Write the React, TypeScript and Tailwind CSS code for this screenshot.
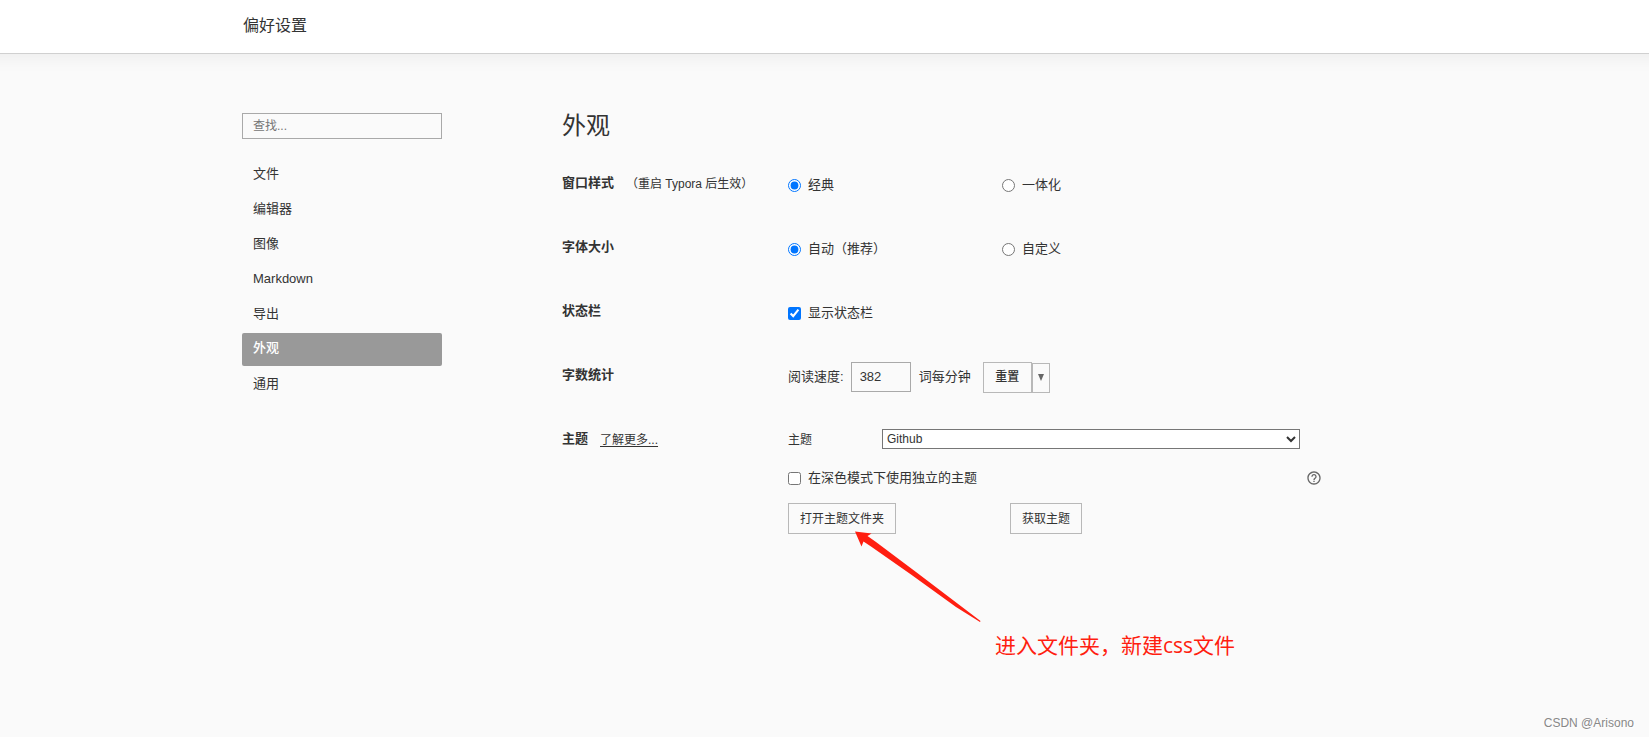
import React, { useState } from "react";
import { MdHelpOutline } from "react-icons/md";

const sections = ["文件", "编辑器", "图像", "Markdown", "导出", "外观", "通用"];

const buttonClass = "border border-[#b8b8b8] text-xs text-[#333] hover:bg-[#eee]";

type RowProps = {
  title: string;
  note?: React.ReactNode;
  children: React.ReactNode;
};

function Row({ title, note, children }: RowProps) {
  return (
    <section className="grid min-h-16 grid-cols-[226px_1fr]">
      <div className="flex h-5 items-center">
        <h2 className="font-bold">{title}</h2>
        {note}
      </div>
      <div>{children}</div>
    </section>
  );
}

type ChoiceProps = {
  type: "radio" | "checkbox";
  label: string;
  name: string;
  checked: boolean;
  onChange: () => void;
};

function Choice({ type, label, name, checked, onChange }: ChoiceProps) {
  return (
    <label className="flex h-6 items-center gap-[7px]">
      <input
        type={type}
        name={name}
        checked={checked}
        onChange={onChange}
        className="h-[13px] w-[13px] accent-[#0075ff]"
      />
      {label}
    </label>
  );
}

function Annotation() {
  return (
    <div className="pointer-events-none absolute left-[66px] top-7 text-[#ff1e10]">
      <svg width="128" height="92" viewBox="0 0 128 92" fill="currentColor">
        <path d="M1 0.5 L17.5 2.5 L13.5 5 L22 11 L62 41 L126.5 90 L126 91 L102 76 L57 43.5 L17 15.5 L9.5 10.5 L7.5 15.5 Z" />
      </svg>
      <p className="ml-[141px] mt-1.5 whitespace-nowrap font-['Open_Sans','Noto_Sans_CJK_SC',sans-serif] text-[21px] leading-8">
        进入文件夹，新建css文件
      </p>
    </div>
  );
}

export default function App() {
  const [active, setActive] = useState("外观");
  const [windowStyle, setWindowStyle] = useState("经典");
  const [fontSize, setFontSize] = useState("自动（推荐）");
  const [showStatus, setShowStatus] = useState(true);
  const [darkTheme, setDarkTheme] = useState(false);
  const [speed, setSpeed] = useState("382");

  return (
    <div className="relative min-h-screen overflow-x-hidden bg-[#fafafa] font-['Liberation_Sans','Noto_Sans_CJK_SC',sans-serif] text-[13px] leading-5 text-[#333]">
      <header className="border-b border-[#d0d0d0] bg-white shadow-[0_-20px_20px_20px_rgba(0,0,0,0.08)]">
        <div className="mx-auto flex h-[53px] max-w-[1165px] items-center">
          <h1 className="pb-0.5 pl-px text-base">偏好设置</h1>
        </div>
      </header>

      <div className="mx-auto flex max-w-[1165px] gap-[120px] pt-[59px]">
        <aside className="w-[200px] shrink-0">
          <input
            type="search"
            aria-label="查找"
            placeholder="查找..."
            className="h-[26px] w-full border border-[#a9a9a9] bg-transparent px-2.5 text-xs placeholder:text-[#757575]"
          />
          <nav className="mt-[19px] flex flex-col gap-0.5">
            {sections.map((item) => (
              <a
                key={item}
                href="#"
                onClick={() => setActive(item)}
                className={
                  item === active
                    ? "flex h-[33px] items-center rounded-xs bg-[#999] px-[11px] pb-1 font-medium text-white"
                    : "flex h-[33px] items-center px-[11px] pb-0.5"
                }
              >
                {item}
              </a>
            ))}
          </nav>
        </aside>

        <main className="max-w-[760px] flex-1">
          <h1 className="mb-[34px] text-2xl leading-[26px]">外观</h1>

          <Row title="窗口样式" note={<span className="ml-3 pt-0.5 text-xs">（重启 Typora 后生效）</span>}>
            <div className="grid grid-cols-[214px_1fr]">
              {["经典", "一体化"].map((value) => (
                <Choice
                  key={value}
                  type="radio"
                  name="window-style"
                  label={value}
                  checked={windowStyle === value}
                  onChange={() => setWindowStyle(value)}
                />
              ))}
            </div>
          </Row>

          <Row title="字体大小">
            <div className="grid grid-cols-[214px_1fr]">
              {["自动（推荐）", "自定义"].map((value) => (
                <Choice
                  key={value}
                  type="radio"
                  name="font-size"
                  label={value}
                  checked={fontSize === value}
                  onChange={() => setFontSize(value)}
                />
              ))}
            </div>
          </Row>

          <Row title="状态栏">
            <Choice
              type="checkbox"
              name="status-bar"
              label="显示状态栏"
              checked={showStatus}
              onChange={() => setShowStatus(!showStatus)}
            />
          </Row>

          <Row title="字数统计">
            <div className="flex h-6 items-center">
              <label htmlFor="speed">阅读速度:</label>
              <input
                id="speed"
                value={speed}
                onChange={(event) => setSpeed(event.target.value)}
                className="ml-[7px] h-[30px] w-[60px] border border-[#a9a9a9] px-2 pb-0.5"
              />
              <span className="ml-2">词每分钟</span>
              <div className="ml-3 flex items-end">
                <button type="button" onClick={() => setSpeed("382")} className={`${buttonClass} h-[31px] w-[49px] font-medium`}>
                  重置
                </button>
                <button type="button" aria-label="更多" className={`${buttonClass} flex h-[30px] w-[18px] items-center justify-center`}>
                  <svg width="6" height="7" viewBox="0 0 6 7" fill="#666">
                    <path d="M0 0h6L3 7z" />
                  </svg>
                </button>
              </div>
            </div>
          </Row>

          <Row
            title="主题"
            note={
              <a href="#" className="ml-3 pt-0.5 text-xs underline underline-offset-2">
                了解更多...
              </a>
            }
          >
            <div className="flex h-5 items-center">
              <label htmlFor="theme" className="w-[94px] pt-0.5 text-xs">
                主题
              </label>
              <select id="theme" className="h-5 w-[418px] border border-[#767676] bg-white text-xs text-[#333]">
                <option>Github</option>
                <option>Newsprint</option>
                <option>Night</option>
              </select>
            </div>
            <div className="mt-[17px] flex items-center justify-between">
              <Choice
                type="checkbox"
                name="dark-theme"
                label="在深色模式下使用独立的主题"
                checked={darkTheme}
                onChange={() => setDarkTheme(!darkTheme)}
              />
              <MdHelpOutline size={16} color="#666" />
            </div>
            <div className="relative mt-[13px] grid grid-cols-[222px_1fr]">
              <div>
                <button type="button" className={`${buttonClass} h-[31px] w-[108px]`}>
                  打开主题文件夹
                </button>
              </div>
              <div>
                <button type="button" className={`${buttonClass} h-[31px] w-[72px]`}>
                  获取主题
                </button>
              </div>
              <Annotation />
            </div>
          </Row>
        </main>
      </div>

      <footer className="absolute bottom-1 right-[15px] text-xs leading-5 text-[#888] [text-shadow:1px_1px_1px_#fff]">
        CSDN @Arisono
      </footer>
    </div>
  );
}
